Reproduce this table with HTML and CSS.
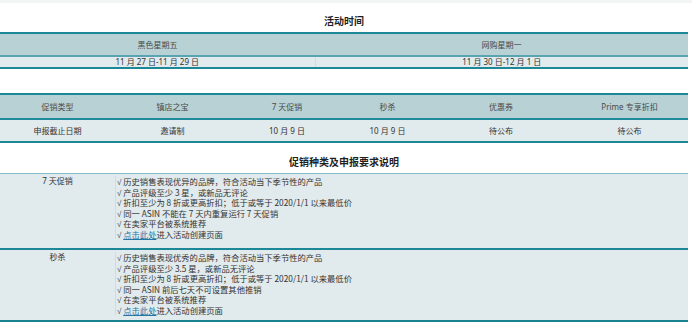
FILE: index.html
```html
<!DOCTYPE html>
<html lang="zh-CN">
<head>
<meta charset="utf-8">
<title>活动时间</title>
<link rel="stylesheet" href="styles.css">
</head>
<body>
<div class="page">
  <div class="topband"></div>
  <h2 class="title t1">活动时间</h2>
  <table class="tbl tbl-time">
    <colgroup><col class="c-a"><col class="c-b"></colgroup>
    <thead>
      <tr class="hd"><th>黑色星期五</th><th>网购星期一</th></tr>
    </thead>
    <tbody>
      <tr class="rw"><td class="sep">11 月 27 日-11 月 29 日</td><td>11 月 30 日-12 月 1 日</td></tr>
    </tbody>
  </table>

  <table class="tbl tbl-deadline">
    <colgroup>
      <col class="d1"><col class="d2"><col class="d3"><col class="d4"><col class="d5"><col class="d6">
    </colgroup>
    <thead>
      <tr class="hd"><th>促销类型</th><th>镇店之宝</th><th>7 天促销</th><th>秒杀</th><th>优惠券</th><th>Prime 专享折扣</th></tr>
    </thead>
    <tbody>
      <tr class="rw"><td>申报截止日期</td><td>邀请制</td><td>10 月 9 日</td><td>10 月 9 日</td><td>待公布</td><td>待公布</td></tr>
    </tbody>
  </table>

  <h2 class="title t2">促销种类及申报要求说明</h2>
  <div class="reqs">
    <div class="req r1">
      <div class="label">7 天促销</div>
      <ul class="list">
        <li><span class="ck">√</span> 历史销售表现优异的品牌，符合活动当下季节性的产品</li>
        <li><span class="ck">√</span> 产品评级至少 3 星，或新品无评论</li>
        <li><span class="ck">√</span> 折扣至少为 8 折或更高折扣；低于或等于 2020/1/1 以来最低价</li>
        <li><span class="ck">√</span> 同一 ASIN 不能在 7 天内重复运行 7 天促销</li>
        <li><span class="ck">√</span> 在卖家平台被系统推荐</li>
        <li><span class="ck">√</span> <a href="#">点击此处</a>进入活动创建页面</li>
      </ul>
    </div>
    <div class="req r2">
      <div class="label">秒杀</div>
      <ul class="list">
        <li><span class="ck">√</span> 历史销售表现优秀的品牌，符合活动当下季节性的产品</li>
        <li><span class="ck">√</span> 产品评级至少 3.5 星，或新品无评论</li>
        <li><span class="ck">√</span> 折扣至少为 8 折或更高折扣；低于或等于 2020/1/1 以来最低价</li>
        <li><span class="ck">√</span> 同一 ASIN 前后七天不可设置其他推销</li>
        <li><span class="ck">√</span> 在卖家平台被系统推荐</li>
        <li><span class="ck">√</span> <a href="#">点击此处</a>进入活动创建页面</li>
      </ul>
    </div>
  </div>
</div>
</body>
</html>
```

FILE: styles.css
```css
html, body {
  margin: 0;
  padding: 0;
  background: #ffffff;
}

body {
  font-family: "Noto Sans", "Noto Sans CJK SC", sans-serif;
  font-size: 8px;
  color: #333333;
}

.page {
  width: 688px;
}

.topband {
  height: 3px;
  background: #f3f5f5;
  width: 692px;
}

.title {
  margin: 0;
  font-size: 10px;
  font-weight: 700;
  color: #1f1f1f;
  text-align: center;
  line-height: 14px;
  height: 14px;
}

.t1 {
  padding: 11px 0 4px;
}

.t2 {
  padding: 12px 0 4px;
}

.tbl {
  width: 688px;
  border-collapse: collapse;
  table-layout: fixed;
  border-top: 2px solid #1b8797;
  border-bottom: 2px solid #1b8797;
}

.tbl th,
.tbl td {
  padding: 0;
  text-align: center;
  font-weight: 400;
  font-size: 8px;
  white-space: nowrap;
}

.hd {
  background: #b7d1d5;
}

.hd th {
  color: #4a4a4a;
}

.rw {
  background: #e1eaec;
}

.c-a { width: 315px; }
.c-b { width: 373px; }

.tbl-time .hd th {
  height: 21px;
  border-bottom: 2px solid #5aa4b1;
}

.tbl-time .rw td {
  height: 10px;
  line-height: 10px;
  color: #333333;
}

.tbl-time .rw td.sep {
  border-right: 1px solid #d3dbdd;
}

.tbl-deadline {
  margin-top: 24px;
}

.d1 { width: 115px; }
.d2 { width: 115px; }
.d3 { width: 114px; }
.d4 { width: 87px; }
.d5 { width: 140px; }
.d6 { width: 117px; }

.tbl-deadline .hd th {
  height: 23px;
  border-bottom: 2px solid #1f8a99;
}

.tbl-deadline .rw td {
  height: 21px;
  color: #333333;
}

.reqs {
  border-top: 1px solid #7fbfcc;
  border-bottom: 2px solid #18828f;
  background: #e1eaec;
}

.req {
  display: flex;
  align-items: flex-start;
  padding-top: 2px;
}

.r1 {
  height: 72px;
  border-bottom: 2px solid #1b8797;
}

.r2 {
  height: 68px;
}

.label {
  width: 115px;
  flex: none;
  text-align: center;
  line-height: 10.5px;
  color: #333333;
}

.list {
  list-style: none;
  margin: 0;
  padding: 0 0 0 1px;
  border-left: 1px solid #d3dbdd;
  font-family: "Noto Sans CJK SC", "Noto Sans", sans-serif;
  font-size: 8.3px;
}

.list li {
  height: 10.5px;
  line-height: 10.5px;
  white-space: nowrap;
  color: #333333;
}

.ck {
  font-family: "Liberation Sans", "DejaVu Sans", sans-serif;
  font-size: 8px;
  line-height: 0;
  color: #444444;
}

.list a {
  color: #2376a6;
  text-decoration: underline;
}
```
